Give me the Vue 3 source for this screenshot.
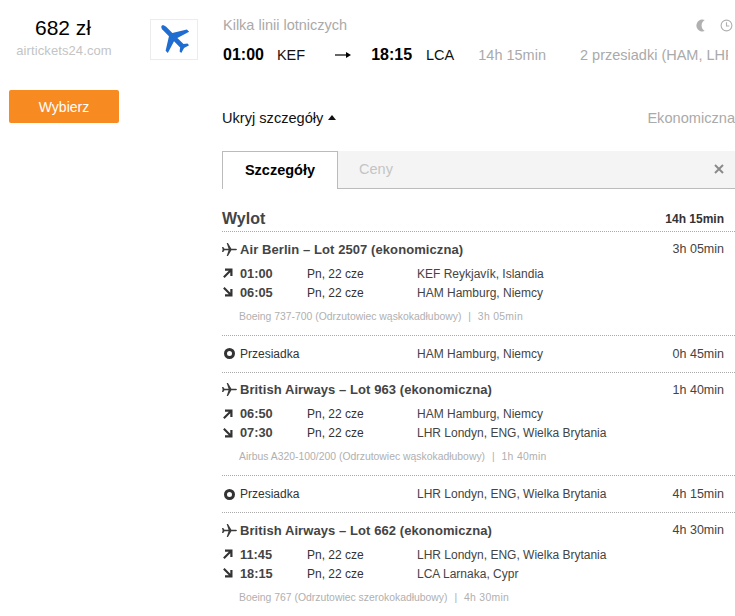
<template>
<div class="page">
  <div class="top">
    <div class="price-col">
      <div class="price">682 zł</div>
      <div class="agent">airtickets24.com</div>
      <button class="btn-select">Wybierz</button>
    </div>
    <div class="logo">
      <svg viewBox="0 1.300 24 24" width="38" height="38"><path fill="#1f6dd0" transform="rotate(-45 12 12)" d="M21.500 16v-2l-8-5V3.500C13.500 2.400 12.800 1 12 1s-1.500 1.400-1.500 2.500V9l-8 5v2l8-2.500V19l-2 1.500V22l3.500-1 3.500 1v-1.500l-2-1.500v-5.500z"/></svg>
    </div>
    <div class="summary">
      <div class="sum-head">
        <span>Kilka linii lotniczych</span>
        <span class="sum-icons">
          <svg viewBox="0 0 14 14" width="13" height="13"><path fill="#b0b0b0" d="M10.500 1A6.500 6.500 0 1 0 10.500 13 7 7 0 0 1 10.500 1z"/></svg>
          <svg viewBox="0 0 14 14" width="13" height="13"><circle cx="7" cy="7" r="5.800" fill="none" stroke="#b0b0b0" stroke-width="1.200"/><path d="M7 3.500V7.500H10" fill="none" stroke="#b0b0b0" stroke-width="1.200"/></svg>
        </span>
      </div>
      <div class="sum-row">
        <b class="t1">01:00</b><span class="code c1">KEF</span>
        <svg class="arrow" viewBox="0 0 16 8" width="16" height="8"><path d="M0 4H13" stroke="#000" stroke-width="1.200"/><path d="M11 1l5 3-5 3z" fill="#000"/></svg>
        <b class="t2">18:15</b><span class="code c2">LCA</span>
        <span class="dur">14h 15min</span>
        <span class="stops">2 przesiadki (HAM, LHR)</span>
      </div>
      <div class="toggle-row">
        <span class="toggle">Ukryj szczegóły <i class="tri"></i></span>
        <span class="cabin">Ekonomiczna</span>
      </div>
    </div>
  </div>
  <div class="panel">
    <div class="tabs">
      <div class="tab active">Szczegóły</div>
      <div class="tab">Ceny</div>
      <svg class="close" viewBox="0 0 10 10" width="10" height="10"><path d="M1 1l8 8M9 1l-8 8" stroke="#8a8a8a" stroke-width="2"/></svg>
    </div>
    <div class="head-row">
      <span class="wylot">Wylot</span>
      <b class="total">14h 15min</b>
    </div>
    <template v-for="(s, i) in segments" :key="i">
      <div class="leg">
        <div class="leg-title">
          <svg class="small-plane" viewBox="0 0 24 24" width="15" height="15"><path fill="#3a3a3a" transform="rotate(90 12 12)" d="M12 0c-.8 0-1.200 1.200-1.200 2.500V9l-9.300 5.500v2l9.300-3V20l-2.800 2v2l4-1 4 1v-2l-2.800-2v-6.500l9.300 3v-2L13.200 9V2.500C13.200 1.200 12.800 0 12 0z"/></svg>
          <b class="name">{{ s.name }}</b>
          <span class="time-right">{{ s.time }}</span>
        </div>
        <div class="stop" v-for="(p, j) in s.points" :key="j">
          <svg class="dir" viewBox="0 0 12 12" width="12" height="12"><path :transform="j ? 'rotate(90 6 6)' : ''" d="M3 1.500H10.500V9H8.300V5.200L2.600 10.900 1.100 9.400 6.800 3.700H3z" fill="#333"/></svg>
          <b class="hour">{{ p[0] }}</b>
          <span class="date">Pn, 22 cze</span>
          <span class="place">{{ p[1] }}</span>
        </div>
        <div class="meta">{{ s.meta }} <span class="sep">|</span> <span class="meta-time">{{ s.time }}</span></div>
      </div>
      <div class="layover" v-if="s.wait">
        <i class="dot"></i>
        <span class="lay-label">Przesiadka</span>
        <span class="place">{{ s.wait[0] }}</span>
        <span class="time-right">{{ s.wait[1] }}</span>
      </div>
    </template>
  </div>
</div>
</template>

<script setup>
const segments = [
  {
    name: "Air Berlin – Lot 2507 (ekonomiczna)",
    time: "3h 05min",
    points: [["01:00", "KEF Reykjavík, Islandia"], ["06:05", "HAM Hamburg, Niemcy"]],
    meta: "Boeing 737-700 (Odrzutowiec wąskokadłubowy)",
    wait: ["HAM Hamburg, Niemcy", "0h 45min"],
  },
  {
    name: "British Airways – Lot 963 (ekonomiczna)",
    time: "1h 40min",
    points: [["06:50", "HAM Hamburg, Niemcy"], ["07:30", "LHR Londyn, ENG, Wielka Brytania"]],
    meta: "Airbus A320-100/200 (Odrzutowiec wąskokadłubowy)",
    wait: ["LHR Londyn, ENG, Wielka Brytania", "4h 15min"],
  },
  {
    name: "British Airways – Lot 662 (ekonomiczna)",
    time: "4h 30min",
    points: [["11:45", "LHR Londyn, ENG, Wielka Brytania"], ["18:15", "LCA Larnaka, Cypr"]],
    meta: "Boeing 767 (Odrzutowiec szerokokadłubowy)",
  },
]
</script>

<style>
html, body { background: #fff; overflow: hidden; }
</style>

<style scoped>
.page { width: 735px; height: 616px; overflow: hidden; font-family: "Liberation Sans", Arial, sans-serif; color: #333; }
.top { display: flex; height: 151px; }
.price-col { width: 128px; padding-top: 16px; flex: none; text-align: center; }
.price { font-size: 21px; line-height: 24px; color: #000; padding-right: 2px; }
.agent { font-size: 13px; letter-spacing: .1px; line-height: 16px; margin-top: 3px; color: #c4c4c4; }
.btn-select { display: block; width: 110px; height: 33px; margin: 31px 0 0 9px; border: none; border-radius: 2px; background: #f78a21; color: #fff; font: 14px "Liberation Sans", Arial, sans-serif; }
.logo { width: 48px; height: 41px; margin: 19px 0 0 22px; border: 1px solid #ececec; box-sizing: border-box; display: flex; align-items: center; justify-content: center; flex: none; }
.summary { margin-left: 24px; width: 513px; overflow: hidden; flex: none; }
.sum-head { display: flex; justify-content: space-between; padding: 17px 0 0 1px; line-height: 16px; font-size: 14.500px; color: #aaa; }
.sum-icons { display: flex; gap: 12px; padding-right: 2px; align-items: center; }
.sum-row { display: flex; align-items: center; margin-top: 12px; height: 20px; padding-left: 1px; font-size: 14.500px; white-space: nowrap; width: 505px; overflow: hidden; }
.sum-row b { font-size: 16px; color: #000; }
.code { color: #111; font-size: 14.500px; }
.c1 { margin-left: 13px; }
.arrow { margin-left: 30px; flex: none; }
.t2 { margin-left: 20px; }
.c2 { margin-left: 14px; }
.dur { margin-left: 24px; color: #aaa; }
.stops { margin-left: 34px; color: #aaa; }
.toggle-row { display: flex; justify-content: space-between; margin-top: 44px; line-height: 18px; font-size: 14.600px; }
.toggle { color: #111; }
.tri { display: inline-block; border: 4px solid transparent; border-bottom: 5px solid #111; border-top: 0; vertical-align: 3px; margin-left: 1px; }
.cabin { color: #aaa; }
.panel { margin-left: 222px; width: 513px; }
.tabs { display: flex; height: 38px; box-sizing: border-box; background: #f4f4f4; border-bottom: 1px solid #bbb; position: relative; }
.tab { width: 116px; box-sizing: border-box; font-size: 14.500px; line-height: 37px; text-align: center; color: #c4c4c4; }
.tab:not(.active) { width: 56px; margin-left: 10px; }
.tab.active { height: 38px; background: #fff; border: 1px solid #bbb; border-bottom: none; font-weight: bold; color: #000; }
.close { margin: 13px 11px 0 auto; }
.head-row { display: flex; justify-content: space-between; align-items: center; height: 43px; padding-right: 11px; border-bottom: 1px dotted #aaa; box-sizing: border-box; padding-top: 17px; }
.wylot { font-size: 16px; font-weight: bold; color: #444; }
.total { font-size: 12px; }
.leg { border-bottom: 1px dotted #aaa; padding-right: 11px; }
.leg-title { display: flex; align-items: center; height: 17px; margin-top: 8.750px; font-size: 13px; }
.small-plane { width: 15px; margin-right: 3px; flex: none; }
.name { color: #444; letter-spacing: .08px; }
.time-right { margin-left: auto; font-size: 12.500px; color: #444; }
.stop { display: flex; align-items: baseline; height: 19px; line-height: 19px; font-size: 12px; }
.leg-title + .stop { margin-top: 6px; }
.dir { flex: none; margin: 0 6px 0 0; align-self: center; }
.hour { width: 67px; font-size: 12.800px; color: #444; }
.date { width: 110px; }
.place { color: #444; }
.meta { font-size: 10.400px; color: #b0b0b0; margin-top: 8px; height: 24.750px; padding-left: 17px; line-height: 14px; }
.sep { margin: 0 4px; }
.meta-time { letter-spacing: .3px; }
.layover { display: flex; align-items: center; height: 37px; font-size: 12px; border-bottom: 1px dotted #aaa; padding-right: 11px; box-sizing: border-box; }
.dot { width: 11px; height: 11px; border: 3px solid #333; border-radius: 50%; box-sizing: border-box; margin: 0 5px 0 2px; flex: none; }
.lay-label { width: 177px; }
</style>
